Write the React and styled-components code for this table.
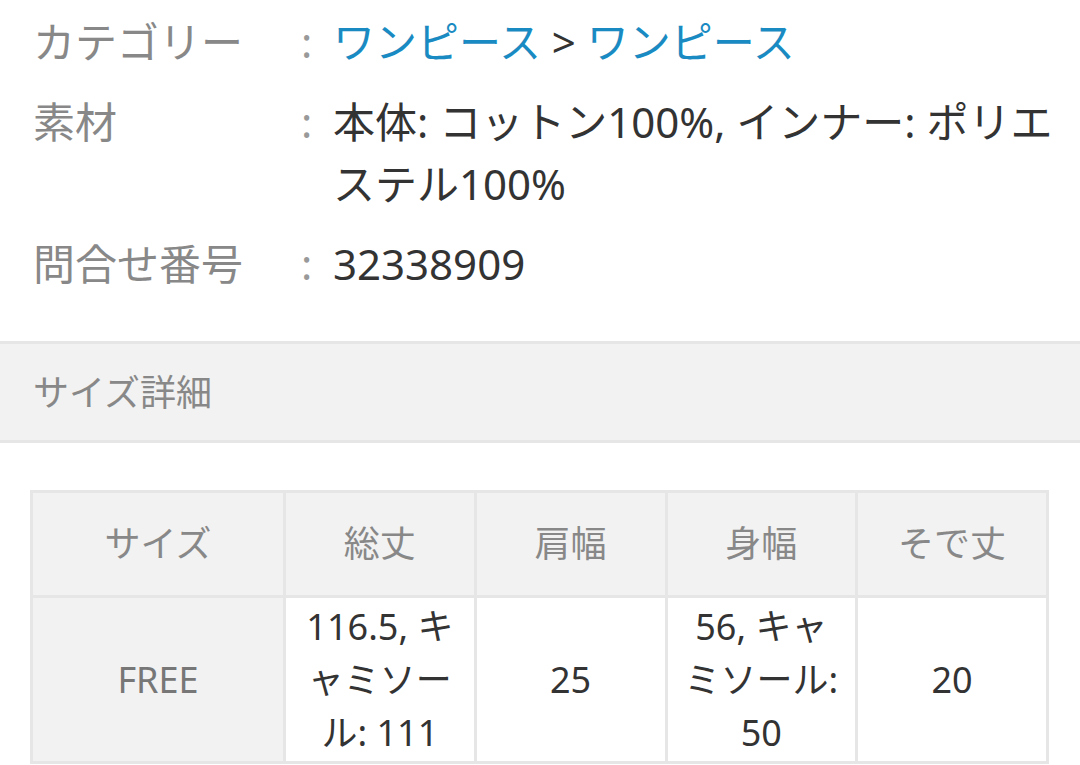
import styled, { createGlobalStyle } from 'styled-components';

const GlobalStyle = createGlobalStyle`
body{
    margin: 0;
    background: #fff;
    font-family: "Noto Sans", "Noto Sans CJK JP", sans-serif;
}
`;

const specs = [
    { label: 'カテゴリー', links: ['ワンピース', 'ワンピース'] },
    { label: '素材', value: '本体: コットン100%, インナー: ポリエステル100%' },
    { label: '問合せ番号', value: '32338909' },
];

const sizeHead = ['サイズ', '総丈', '肩幅', '身幅', 'そで丈'];
const sizeRows = [
    ['FREE', '116.5, キャミソール: 111', '25', '56, キャミソール: 50', '20'],
];

const App = () => {
    return (
        <Page>
            <GlobalStyle />
            <SpecList>
                {specs.map((s) => (
                    <SpecRow key={s.label}>
                        <Label>{s.label}</Label>
                        <Colon>:</Colon>
                        <Value>
                            {s.links ? (
                                <>
                                    <Link>{s.links[0]}</Link>
                                    <Sep> &gt; </Sep>
                                    <Link>{s.links[1]}</Link>
                                </>
                            ) : s.value}
                        </Value>
                    </SpecRow>
                ))}
            </SpecList>

            <SectionBar>サイズ詳細</SectionBar>

            <TableWrap>
                <SizeTable>
                    <colgroup>
                        <col style={{ width: '253px' }} />
                        <col />
                        <col />
                        <col />
                        <col />
                    </colgroup>
                    <thead>
                        <tr>
                            {sizeHead.map((h) => <Th key={h}>{h}</Th>)}
                        </tr>
                    </thead>
                    <tbody>
                        {sizeRows.map((r) => (
                            <tr key={r[0]}>
                                {r.map((c, i) => (
                                    <Td key={i} $head={i === 0}>{c}</Td>
                                ))}
                            </tr>
                        ))}
                    </tbody>
                </SizeTable>
            </TableWrap>
        </Page>
    );
}

export default App;

const Page = styled.div`
width: 1080px;
`;

const SpecList = styled.div`
display: flex;
flex-direction: column;
gap: 18px;
padding: 11px 16px 0 33px;
margin-bottom: 46px;
`;

const SpecRow = styled.div`
display: grid;
grid-template-columns: 268px 32px 1fr;
font-size: 42px;
line-height: 62px;
`;

const Label = styled.div`
color: #888;
white-space: nowrap;
`;

const Colon = styled.div`
color: #999;
`;

const Value = styled.div`
color: #333;
`;

const Link = styled.span`
color: #1a8bc2;
`;

const Sep = styled.span`
color: #333;
`;

const SectionBar = styled.div`
background: #f2f2f2;
border-top: 3px solid #e6e6e6;
border-bottom: 3px solid #e6e6e6;
height: 96px;
display: flex;
align-items: center;
padding: 0 0 4px 33px;
box-sizing: border-box;
height: 102px;
font-size: 36px;
color: #888;
`;

const TableWrap = styled.div`
padding: 47px 31px 0 30px;
`;

const SizeTable = styled.table`
width: 100%;
table-layout: fixed;
border-collapse: collapse;
border: 3px solid #e6e6e6;
font-size: 36px;
`;

const Th = styled.th`
background: #f2f2f2;
border: 3px solid #e6e6e6;
color: #888;
font-weight: normal;
line-height: 52px;
padding: 25px 12px;
`;

const Td = styled.td`
background: ${(p) => (p.$head ? '#f2f2f2' : '#fff')};
color: ${(p) => (p.$head ? '#777' : '#333')};
border: 3px solid #e6e6e6;
text-align: center;
line-height: 53px;
padding: 2px 12px;
`;
